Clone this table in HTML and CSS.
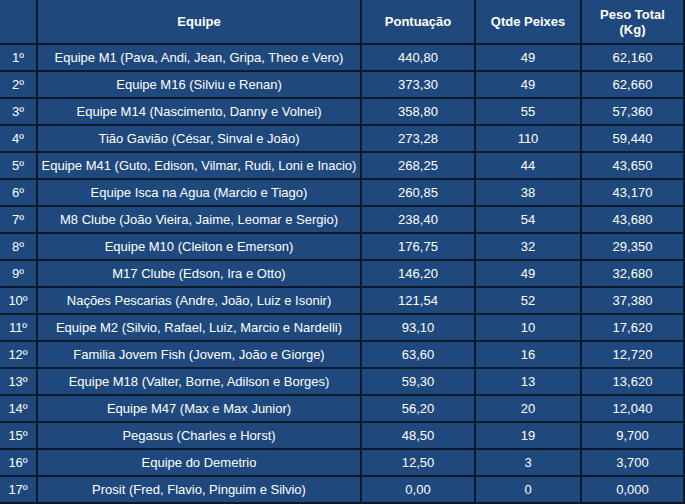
FILE: index.html
```html
<!DOCTYPE html>
<html lang="pt-BR">
<head>
<meta charset="utf-8">
<title>Classificação</title>
<link rel="stylesheet" href="styles.css">
</head>
<body>
<table class="rank">
  <colgroup>
    <col class="c-pos">
    <col class="c-team">
    <col class="c-pts">
    <col class="c-qty">
    <col class="c-kg">
  </colgroup>
  <thead>
    <tr class="head">
      <th></th>
      <th>Equipe</th>
      <th>Pontuação</th>
      <th>Qtde Peixes</th>
      <th>Peso Total<br>(Kg)</th>
    </tr>
  </thead>
  <tbody>
    <tr><td>1º</td><td>Equipe M1 (Pava, Andi, Jean, Gripa, Theo e Vero)</td><td>440,80</td><td>49</td><td>62,160</td></tr>
    <tr><td>2º</td><td>Equipe M16 (Silviu e Renan)</td><td>373,30</td><td>49</td><td>62,660</td></tr>
    <tr><td>3º</td><td>Equipe M14 (Nascimento, Danny e Volnei)</td><td>358,80</td><td>55</td><td>57,360</td></tr>
    <tr><td>4º</td><td>Tião Gavião (César, Sinval e João)</td><td>273,28</td><td>110</td><td>59,440</td></tr>
    <tr><td>5º</td><td>Equipe M41 (Guto, Edison, Vilmar, Rudi, Loni e Inacio)</td><td>268,25</td><td>44</td><td>43,650</td></tr>
    <tr><td>6º</td><td>Equipe Isca na Agua (Marcio e Tiago)</td><td>260,85</td><td>38</td><td>43,170</td></tr>
    <tr><td>7º</td><td>M8 Clube (João Vieira, Jaime, Leomar e Sergio)</td><td>238,40</td><td>54</td><td>43,680</td></tr>
    <tr><td>8º</td><td>Equipe M10 (Cleiton e Emerson)</td><td>176,75</td><td>32</td><td>29,350</td></tr>
    <tr><td>9º</td><td>M17 Clube (Edson, Ira e Otto)</td><td>146,20</td><td>49</td><td>32,680</td></tr>
    <tr><td>10º</td><td>Nações Pescarias (Andre, João, Luiz e Isonir)</td><td>121,54</td><td>52</td><td>37,380</td></tr>
    <tr><td>11º</td><td>Equipe M2 (Silvio, Rafael, Luiz, Marcio e Nardelli)</td><td>93,10</td><td>10</td><td>17,620</td></tr>
    <tr><td>12º</td><td>Familia Jovem Fish (Jovem, João e Giorge)</td><td>63,60</td><td>16</td><td>12,720</td></tr>
    <tr><td>13º</td><td>Equipe M18 (Valter, Borne, Adilson e Borges)</td><td>59,30</td><td>13</td><td>13,620</td></tr>
    <tr><td>14º</td><td>Equipe M47 (Max e Max Junior)</td><td>56,20</td><td>20</td><td>12,040</td></tr>
    <tr><td>15º</td><td>Pegasus (Charles e Horst)</td><td>48,50</td><td>19</td><td>9,700</td></tr>
    <tr><td>16º</td><td>Equipe do Demetrio</td><td>12,50</td><td>3</td><td>3,700</td></tr>
    <tr><td>17º</td><td>Prosit (Fred, Flavio, Pinguim e Silvio)</td><td>0,00</td><td>0</td><td>0,000</td></tr>
  </tbody>
</table>
</body>
</html>
```
FILE: styles.css
```css
html, body {
  margin: 0;
  padding: 0;
  background: #1f497d;
}

.rank {
  border-collapse: separate;
  border-spacing: 0;
  table-layout: fixed;
  width: 685px;
  background: #1f497d;
  color: #ffffff;
  font-family: "Liberation Sans", Arial, sans-serif;
  font-size: 13px;
}

.c-pos { width: 38px; }
.c-team { width: 324px; }
.c-pts { width: 114px; }
.c-qty { width: 106px; }
.c-kg { width: 103px; }

.rank th,
.rank td {
  padding: 0;
  text-align: center;
  vertical-align: middle;
  border-right: 2px solid #0c1a2e;
  border-bottom: 2px solid #0c1a2e;
  white-space: nowrap;
  overflow: hidden;
}

.rank th {
  font-weight: bold;
  line-height: 15px;
}

.rank .head {
  height: 45px;
}

.rank tbody tr {
  height: 27px;
}
```
